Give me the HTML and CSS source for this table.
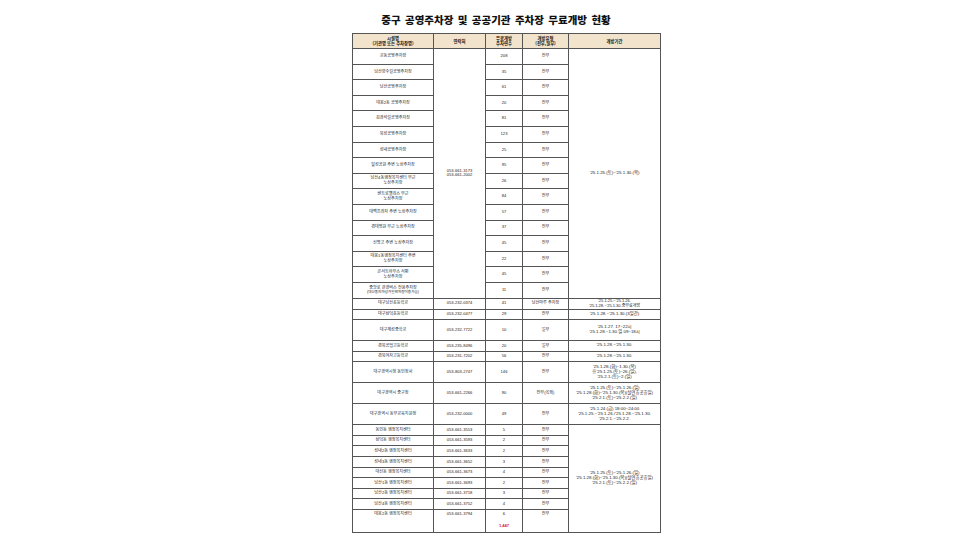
FILE: index.html
```html
<!DOCTYPE html>
<html lang="ko">
<head>
<meta charset="utf-8">
<title>중구 공영주차장 및 공공기관 주차장 무료개방 현황</title>
<link rel="stylesheet" href="styles.css">
</head>
<body>
<div class="page">
  <h1 class="title">중구 공영주차장 및 공공기관 주차장 무료개방 현황</h1>
  <table class="grid">
    <colgroup>
      <col class="c-name"><col class="c-tel"><col class="c-cnt"><col class="c-type"><col class="c-period">
    </colgroup>
    <thead>
      <tr class="r-head">
        <th>시설명<br>(기관명 또는 주차장명)</th>
        <th>연락처</th>
        <th>무료개방<br>주차면수</th>
        <th>개방유형<br>(전부,일부)</th>
        <th>개방기간</th>
      </tr>
    </thead>
    <tbody>
      <tr class="r-a"><td>교동공영주차장</td><td rowspan="16">053-661-3173<br>053-661-2002</td><td>208</td><td>전부</td><td class="period" rowspan="16">'25.1.25.(토)~'25.1.30.(목)</td></tr>
      <tr class="r-a"><td>남산향수길공영주차장</td><td>35</td><td>전부</td></tr>
      <tr class="r-a"><td>남산공영주차장</td><td>61</td><td>전부</td></tr>
      <tr class="r-a"><td>대봉2동 공영주차장</td><td>20</td><td>전부</td></tr>
      <tr class="r-a"><td>김광석길공영주차장</td><td>81</td><td>전부</td></tr>
      <tr class="r-a"><td>북성공영주차장</td><td>123</td><td>전부</td></tr>
      <tr class="r-a"><td>성내공영주차장</td><td>25</td><td>전부</td></tr>
      <tr class="r-a"><td>달성공원 주변 노상주차장</td><td>95</td><td>전부</td></tr>
      <tr class="r-a"><td>남산4동행정복지센터 부근<br>노상주차장</td><td>26</td><td>전부</td></tr>
      <tr class="r-a"><td>센트로팰리스 부근<br>노상주차장</td><td>84</td><td>전부</td></tr>
      <tr class="r-a"><td>대백프라자 주변 노상주차장</td><td>57</td><td>전부</td></tr>
      <tr class="r-a"><td>경대병원 부근 노상주차장</td><td>37</td><td>전부</td></tr>
      <tr class="r-a"><td>신명고 주변 노상주차장</td><td>45</td><td>전부</td></tr>
      <tr class="r-a"><td>대봉1동행정복지센터 주변<br>노상주차장</td><td>22</td><td>전부</td></tr>
      <tr class="r-a"><td>콘서트하우스 서편<br>노상주차장</td><td>45</td><td>전부</td></tr>
      <tr class="r-a"><td>중앙로 관광버스 전용주차장<br><span class="note">(대신동지하상가일반차량이용가능)</span></td><td>11</td><td>전부</td></tr>
      <tr class="r-b"><td>대구남산초등학교</td><td>053-232-0374</td><td>41</td><td>남산마루 주차장</td><td class="period small">'25.1.25.~'25.1.26.<br>'25.1.28.~'25.1.30.중무료개방</td></tr>
      <tr class="r-c"><td>대구삼덕초등학교</td><td>053-232-0477</td><td>29</td><td>전부</td><td class="period">'25.1.28.~'25.1.30.(3일간)</td></tr>
      <tr class="r-d"><td>대구계성중학교</td><td>053-232-7722</td><td>10</td><td>일부</td><td class="period">'25.1.27. 17~22시<br>'25.1.28.~1.30.일 09~18시</td></tr>
      <tr class="r-c"><td>경북공업고등학교</td><td>053-235-8496</td><td>20</td><td>일부</td><td class="period">'25.1.28.~'25.1.30.</td></tr>
      <tr class="r-c"><td>경북여자고등학교</td><td>053-231-7202</td><td>56</td><td>전부</td><td class="period">'25.1.28.~'25.1.30.</td></tr>
      <tr class="r-e"><td>대구광역시청 동인청사</td><td>053-803-2747</td><td>146</td><td>전부</td><td class="period">'25.1.28.(화)~1.30.(목)<br>※'25.1.25.(토)~26.(일),<br>'25.2.1.(토)~2.(일)</td></tr>
      <tr class="r-e"><td>대구광역시 중구청</td><td>053-661-2266</td><td>90</td><td>전부(옥외)</td><td class="period">'25.1.25.(토)~'25.1.26.(일)<br>'25.1.28.(화)~'25.1.30.(목)(설연휴공휴일)<br>'25.2.1.(토)~'25.2.2.(일)</td></tr>
      <tr class="r-e"><td>대구광역시 동부교육지원청</td><td>053-232-0000</td><td>49</td><td>전부</td><td class="period">'25.1.24.(금) 18:00~24:00<br>'25.1.25.~'25.1.26./'25.1.28.~'25.1.30.<br>'25.2.1.~'25.2.2.</td></tr>
      <tr class="r-c"><td>동인동 행정복지센터</td><td>053-661-3553</td><td>5</td><td>전부</td><td class="period" rowspan="9">'25.1.25.(토)~'25.1.26.(일)<br>'25.1.28.(화)~'25.1.30.(목)(설연휴공휴일)<br>'25.2.1.(토)~'25.2.2.(일)</td></tr>
      <tr class="r-c"><td>삼덕동 행정복지센터</td><td>053-661-3593</td><td>2</td><td>전부</td></tr>
      <tr class="r-c"><td>성내2동 행정복지센터</td><td>053-661-3633</td><td>2</td><td>전부</td></tr>
      <tr class="r-c"><td>성내3동 행정복지센터</td><td>053-661-3652</td><td>3</td><td>전부</td></tr>
      <tr class="r-c"><td>대신동 행정복지센터</td><td>053-661-3673</td><td>4</td><td>전부</td></tr>
      <tr class="r-c"><td>남산1동 행정복지센터</td><td>053-661-3693</td><td>2</td><td>전부</td></tr>
      <tr class="r-c"><td>남산2동 행정복지센터</td><td>053-661-3718</td><td>3</td><td>전부</td></tr>
      <tr class="r-c"><td>남산4동 행정복지센터</td><td>053-661-3752</td><td>4</td><td>전부</td></tr>
      <tr class="r-f"><td class="top">대봉2동 행정복지센터</td><td class="top">053-661-3794</td><td class="top">6<br><span class="total">1,447</span></td><td class="top">전부</td></tr>
    </tbody>
  </table>
</div>
</body>
</html>
```

FILE: styles.css
```css
html, body {
  margin: 0;
  padding: 0;
  background: #ffffff;
}

.page {
  width: 960px;
  height: 540px;
  padding-left: 352px;
  box-sizing: border-box;
  font-family: "Liberation Sans", "Noto Sans CJK KR", sans-serif;
  color: #222;
}

.title {
  margin: 0;
  padding-top: 15px;
  width: 288px;
  height: 33px;
  box-sizing: border-box;
  text-align: center;
  font-family: "Noto Sans CJK KR", sans-serif;
  font-weight: 900;
  font-size: 10.5px;
  line-height: 1;
  word-spacing: 1.5px;
  color: #111;
  white-space: nowrap;
}

.grid {
  width: 308px;
  border-collapse: collapse;
  table-layout: fixed;
  border: 1px solid #222;
  font-size: 4.1px;
  line-height: 1.15;
}

.c-name { width: 81px; }
.c-tel { width: 52px; }
.c-cnt { width: 37px; }
.c-type { width: 46px; }
.c-period { width: 92px; }

.grid th,
.grid td {
  border: 1px solid #555;
  padding: 0;
  text-align: center;
  vertical-align: middle;
  white-space: nowrap;
  overflow: hidden;
}

.grid th {
  background: #f2e4cc;
  font-weight: 700;
  font-family: "Noto Sans CJK KR", sans-serif;
  font-size: 4.3px;
  line-height: 1.1;
  color: #111;
}

.grid .period {
  font-size: 4.4px;
  line-height: 1.1;
}

.grid .small {
  font-size: 4px;
}

.r-head { height: 15px; }
.r-a { height: 15.6px; }
.r-b { height: 11px; }
.r-c { height: 10.6px; }
.r-d { height: 21px; }
.r-e { height: 21px; }
.r-f { height: 23px; }

.note {
  font-size: 3.6px;
}

.top {
  vertical-align: top !important;
  padding-top: 2px !important;
}

.total {
  display: inline-block;
  margin-top: 7px;
  color: #e0121a;
  font-weight: 700;
}
```
